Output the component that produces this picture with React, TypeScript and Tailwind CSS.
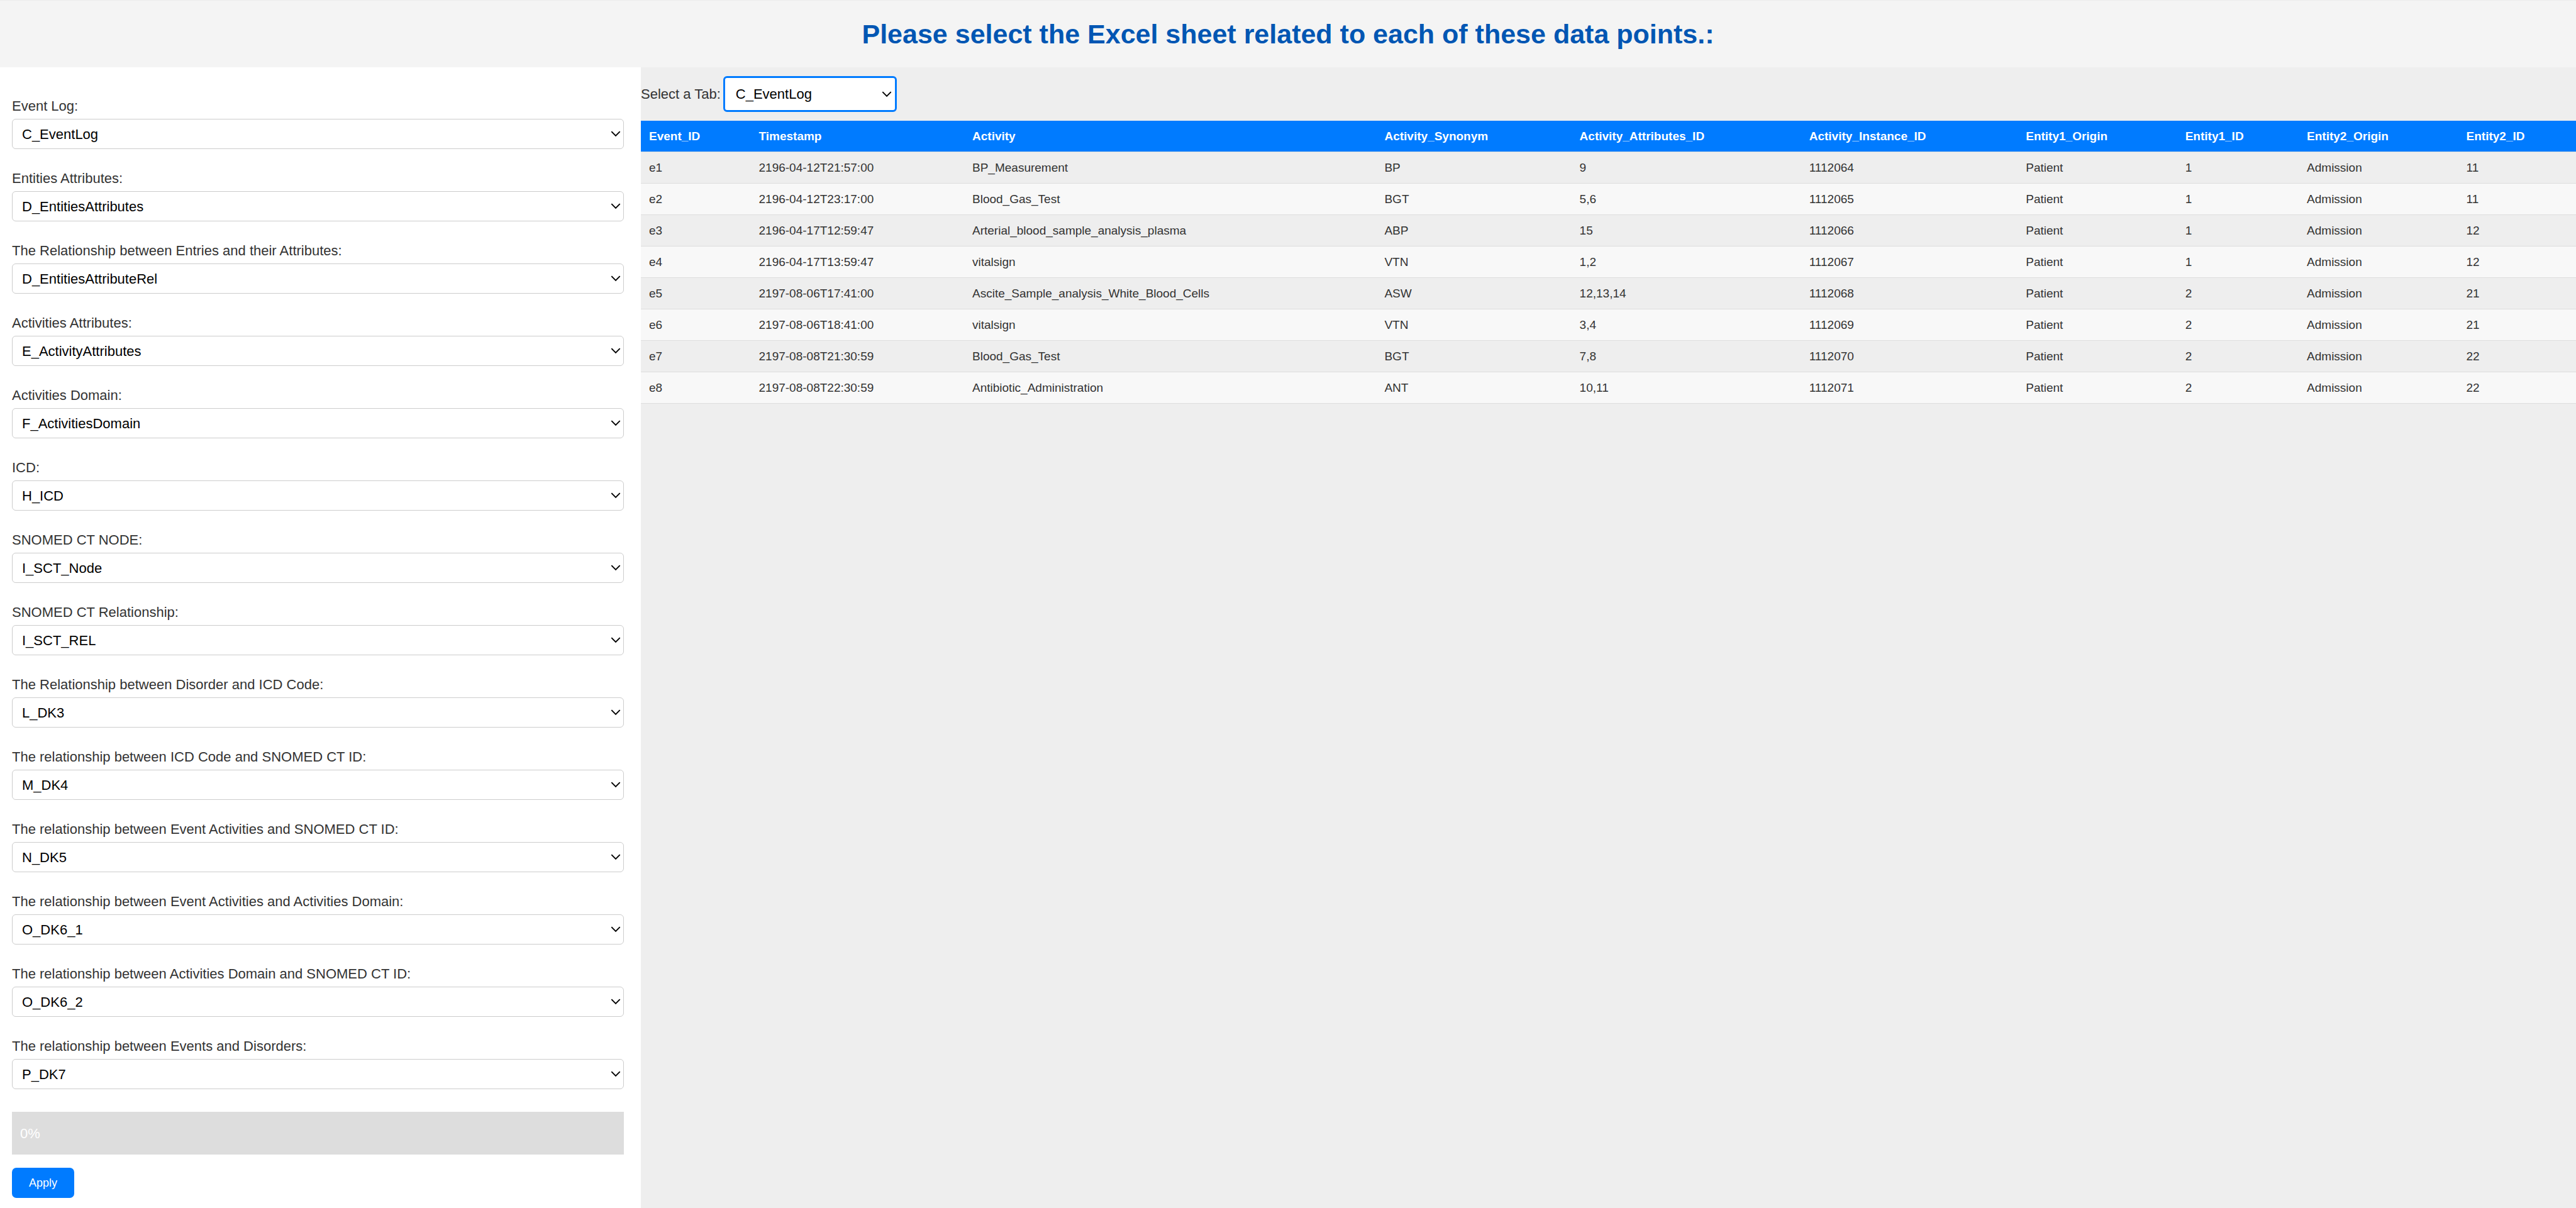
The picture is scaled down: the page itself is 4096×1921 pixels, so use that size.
const fields = [
  { id: 'event-log', label: 'Event Log:', value: 'C_EventLog' },
  { id: 'entities-attributes', label: 'Entities Attributes:', value: 'D_EntitiesAttributes' },
  { id: 'entities-attribute-rel', label: 'The Relationship between Entries and their Attributes:', value: 'D_EntitiesAttributeRel' },
  { id: 'activity-attributes', label: 'Activities Attributes:', value: 'E_ActivityAttributes' },
  { id: 'activities-domain', label: 'Activities Domain:', value: 'F_ActivitiesDomain' },
  { id: 'icd', label: 'ICD:', value: 'H_ICD' },
  { id: 'sct-node', label: 'SNOMED CT NODE:', value: 'I_SCT_Node' },
  { id: 'sct-rel', label: 'SNOMED CT Relationship:', value: 'I_SCT_REL' },
  { id: 'dk3', label: 'The Relationship between Disorder and ICD Code:', value: 'L_DK3' },
  { id: 'dk4', label: 'The relationship between ICD Code and SNOMED CT ID:', value: 'M_DK4' },
  { id: 'dk5', label: 'The relationship between Event Activities and SNOMED CT ID:', value: 'N_DK5' },
  { id: 'dk6-1', label: 'The relationship between Event Activities and Activities Domain:', value: 'O_DK6_1' },
  { id: 'dk6-2', label: 'The relationship between Activities Domain and SNOMED CT ID:', value: 'O_DK6_2' },
  { id: 'dk7', label: 'The relationship between Events and Disorders:', value: 'P_DK7' },
];

const sheets = fields.map((field) => field.value);

const columns = [
  'Event_ID',
  'Timestamp',
  'Activity',
  'Activity_Synonym',
  'Activity_Attributes_ID',
  'Activity_Instance_ID',
  'Entity1_Origin',
  'Entity1_ID',
  'Entity2_Origin',
  'Entity2_ID',
];

const rows = [
  ['e1', '2196-04-12T21:57:00', 'BP_Measurement', 'BP', '9', '1112064', 'Patient', '1', 'Admission', '11'],
  ['e2', '2196-04-12T23:17:00', 'Blood_Gas_Test', 'BGT', '5,6', '1112065', 'Patient', '1', 'Admission', '11'],
  ['e3', '2196-04-17T12:59:47', 'Arterial_blood_sample_analysis_plasma', 'ABP', '15', '1112066', 'Patient', '1', 'Admission', '12'],
  ['e4', '2196-04-17T13:59:47', 'vitalsign', 'VTN', '1,2', '1112067', 'Patient', '1', 'Admission', '12'],
  ['e5', '2197-08-06T17:41:00', 'Ascite_Sample_analysis_White_Blood_Cells', 'ASW', '12,13,14', '1112068', 'Patient', '2', 'Admission', '21'],
  ['e6', '2197-08-06T18:41:00', 'vitalsign', 'VTN', '3,4', '1112069', 'Patient', '2', 'Admission', '21'],
  ['e7', '2197-08-08T21:30:59', 'Blood_Gas_Test', 'BGT', '7,8', '1112070', 'Patient', '2', 'Admission', '22'],
  ['e8', '2197-08-08T22:30:59', 'Antibiotic_Administration', 'ANT', '10,11', '1112071', 'Patient', '2', 'Admission', '22'],
];

function Chevron() {
  return (
    <svg viewBox="0 0 16 10" className="h-[10px] w-4" fill="none" stroke="#000" strokeWidth="1.9" aria-hidden="true">
      <path d="M1.3 1.2 L8 7.9 L14.7 1.2" />
    </svg>
  );
}

function SheetOptions() {
  return (
    <>
      {sheets.map((sheet) => (
        <option key={sheet} value={sheet}>
          {sheet}
        </option>
      ))}
    </>
  );
}

function SheetField({ id, label, value }: { id: string; label: string; value: string }) {
  return (
    <div className="mb-8">
      <label htmlFor={id} className="block pb-[6px] text-[22px] leading-[29px]">
        {label}
      </label>
      <div className="relative">
        <select
          id={id}
          defaultValue={value}
          className="block h-12 w-full appearance-none rounded-[6px] border border-[#ccc] bg-white pl-[15px] pr-8 text-[22px] leading-[25px] text-black"
        >
          <SheetOptions />
        </select>
        <span className="pointer-events-none absolute inset-y-0 right-[5px] flex items-center">
          <Chevron />
        </span>
      </div>
    </div>
  );
}

function TabSelector() {
  return (
    <div className="flex h-[85px] items-center gap-1">
      <label htmlFor="tab" className="text-[22px] leading-[29px]">
        Select a Tab:
      </label>
      <div className="relative">
        <select
          id="tab"
          defaultValue="C_EventLog"
          className="block h-[57px] w-[276px] appearance-none rounded-[6px] border-[3px] border-[#007bff] bg-white pl-[17px] pr-8 text-[22px] leading-[25px] text-black outline-none"
        >
          <SheetOptions />
        </select>
        <span className="pointer-events-none absolute inset-y-0 right-2 flex items-center">
          <Chevron />
        </span>
      </div>
    </div>
  );
}

function EventTable() {
  return (
    <table className="w-[calc(100%+6px)] border-collapse text-left text-[19px] leading-[25px]">
      <thead>
        <tr className="bg-[#007bff] text-white">
          {columns.map((column) => (
            <th key={column} scope="col" className="h-[49px] border-b border-[#ddd] px-[13px] font-bold">
              {column}
            </th>
          ))}
        </tr>
      </thead>
      <tbody>
        {rows.map((row) => (
          <tr key={row[0]} className="even:bg-[#f8f8f8]">
            {row.map((cell, index) => (
              <td key={columns[index]} className="h-[50px] border-b border-[#ddd] px-[13px]">
                {cell}
              </td>
            ))}
          </tr>
        ))}
      </tbody>
    </table>
  );
}

export default function App() {
  return (
    <div className="flex min-h-screen flex-col bg-[#f4f4f4] font-['Liberation_Sans',Arial,sans-serif] text-[#333]">
      <header className="flex h-[107px] items-center justify-center border-t border-[#ececec]">
        <h1 className="text-[43px] leading-[50px] font-bold text-[#0056b3]">
          Please select the Excel sheet related to each of these data points.:
        </h1>
      </header>
      <div className="flex grow">
        <aside className="w-[1019px] shrink-0 bg-white pt-[47px] pr-[27px] pl-[19px]">
          <form>
            {fields.map((field) => (
              <SheetField key={field.id} {...field} />
            ))}
            <div className="mt-9 flex h-[68px] items-center bg-[#ddd] px-[13px] text-[22px] leading-[29px] text-white">0%</div>
            <button
              type="button"
              className="mt-[21px] h-12 rounded-[7px] bg-[#007bff] px-[27px] text-[18px] leading-[21px] text-white"
            >
              Apply
            </button>
          </form>
        </aside>
        <main className="min-w-0 grow overflow-hidden bg-[#eee]">
          <TabSelector />
          <EventTable />
        </main>
      </div>
    </div>
  );
}
